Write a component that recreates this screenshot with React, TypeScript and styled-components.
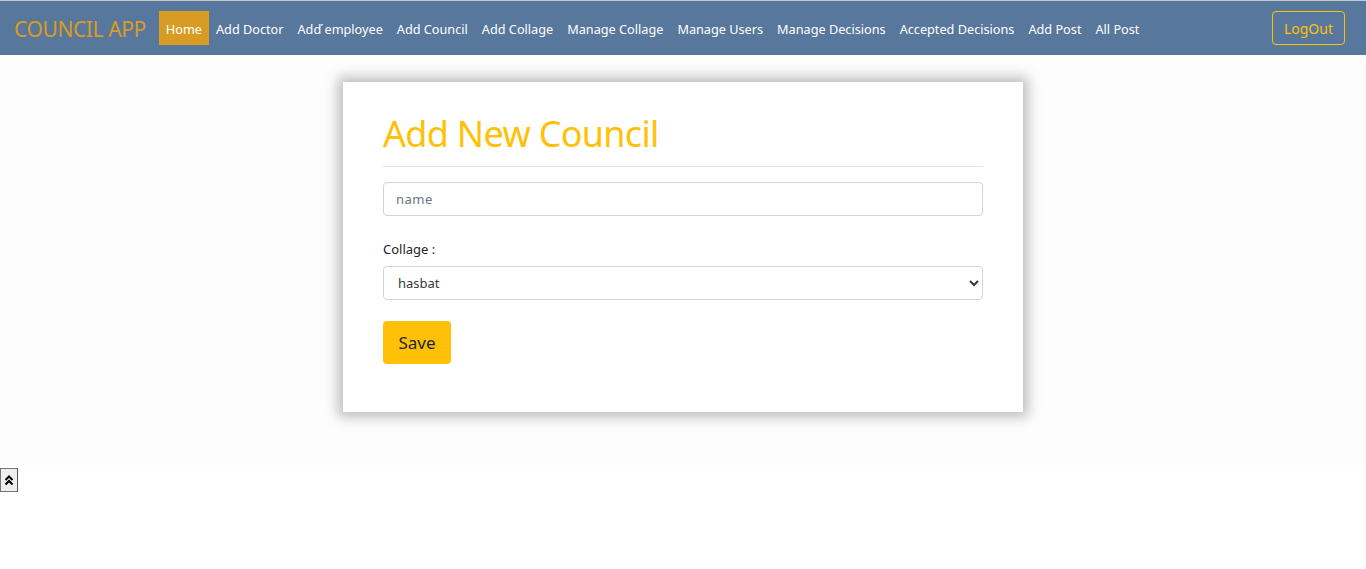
import { createGlobalStyle } from "styled-components";
import styled from "styled-components";

const GlobalStyle = createGlobalStyle`
    body {
        margin: 0;
        font-family: "Noto Sans", "Open Sans", sans-serif;
        background: #ffffff;
    }
`;

const links = [
    "Home",
    "Add Doctor",
    "Add \u0301employee",
    "Add Council",
    "Add Collage",
    "Manage Collage",
    "Manage Users",
    "Manage Decisions",
    "Accepted Decisions",
    "Add Post",
    "All Post",
];

export default function App() {
    return (
        <>
            <GlobalStyle />
            <NavBar>
                <Brand>COUNCIL APP</Brand>
                <NavLinks>
                    {links.map((l, i) => (
                        <NavLink key={l} $active={i === 0}>{l}</NavLink>
                    ))}
                </NavLinks>
                <LogoutButton>LogOut</LogoutButton>
            </NavBar>
            <Main>
                <Card>
                    <Title>Add New Council</Title>
                    <Divider />
                    <TextInput placeholder="name" />
                    <Label>Collage :</Label>
                    <SelectBox defaultValue="hasbat">
                        <option value="hasbat">hasbat</option>
                    </SelectBox>
                    <SaveButton>Save</SaveButton>
                </Card>
            </Main>
            <ScrollTop>
                <svg width="10" height="12" viewBox="0 0 10 12">
                    <path d="M1.5 6 L5 2.5 L8.5 6" fill="none" stroke="#000" strokeWidth="2" />
                    <path d="M1.5 10.5 L5 7 L8.5 10.5" fill="none" stroke="#000" strokeWidth="2" />
                </svg>
            </ScrollTop>
        </>
    );
}

const NavBar = styled.nav`
    display: flex;
    align-items: center;
    height: 54px;
    padding: 0 21px 0 14px;
    background: #58779c;
    border-top: 1px solid #c8c8c8;
`;

const Brand = styled.div`
    font-size: 21px;
    color: #d99c22;
    margin-right: 13px;
    letter-spacing: -0.4px;
    padding-top: 1px;
`;

const NavLinks = styled.div`
    display: flex;
    align-items: center;
    flex: 1;
`;

const NavLink = styled.a<{ $active?: boolean }>`
    display: flex;
    align-items: center;
    box-sizing: border-box;
    height: 34px;
    padding: 2px 7px 0;
    font-size: 12.7px;
    color: #ffffff;
    background: ${(p) => (p.$active ? "#d89c24" : "transparent")};
    cursor: pointer;
    white-space: pre;
`;

const LogoutButton = styled.button`
    height: 34px;
    padding: 1px 11px 0;
    border: 1px solid #ffc107;
    border-radius: 4px;
    background: transparent;
    color: #ffc107;
    font-family: inherit;
    font-size: 14px;
`;

const Main = styled.main`
    background: #fdfdfd;
    padding: 27px 0 54px;
    display: flex;
    justify-content: center;
`;

const Card = styled.div`
    width: 600px;
    padding: 30px 40px 48px;
    background: #ffffff;
    box-shadow: 0 0 12px 5px #bdbdbd;
    display: flex;
    flex-direction: column;
    align-items: flex-start;
`;

const Title = styled.h1`
    margin: 0;
    font-size: 36px;
    font-weight: 400;
    letter-spacing: -0.7px;
    color: #ffc107;
    line-height: 44px;
`;

const Divider = styled.hr`
    width: 100%;
    margin: 10px 0 15px;
    border: 0;
    border-top: 1px solid #e2e2e2;
`;

const TextInput = styled.input`
    box-sizing: border-box;
    width: 100%;
    height: 34px;
    padding: 0 12px;
    border: 1px solid #ced4da;
    border-radius: 4px;
    font-family: inherit;
    font-size: 13px;
    letter-spacing: 0.5px;
    &::placeholder {
        color: #6c757d;
    }
`;

const Label = styled.label`
    margin: 24px 0 8px;
    font-size: 13px;
    color: #212529;
`;

const SelectBox = styled.select`
    box-sizing: border-box;
    width: 100%;
    height: 34px;
    padding: 0 10px;
    border: 1px solid #ced4da;
    border-radius: 4px;
    background: #ffffff;
    font-family: inherit;
    font-size: 13px;
    color: #343a40;
`;

const SaveButton = styled.button`
    margin-top: 21px;
    width: 68px;
    height: 43px;
    border: 0;
    border-radius: 4px;
    background: #ffc107;
    color: #212529;
    font-family: inherit;
    font-size: 17px;
`;

const ScrollTop = styled.button`
    display: flex;
    align-items: center;
    justify-content: center;
    width: 18px;
    height: 24px;
    margin-top: 2px;
    padding: 0;
    border: 1px solid #767676;
    border-right-color: #555;
    background: #efefef;
`;
